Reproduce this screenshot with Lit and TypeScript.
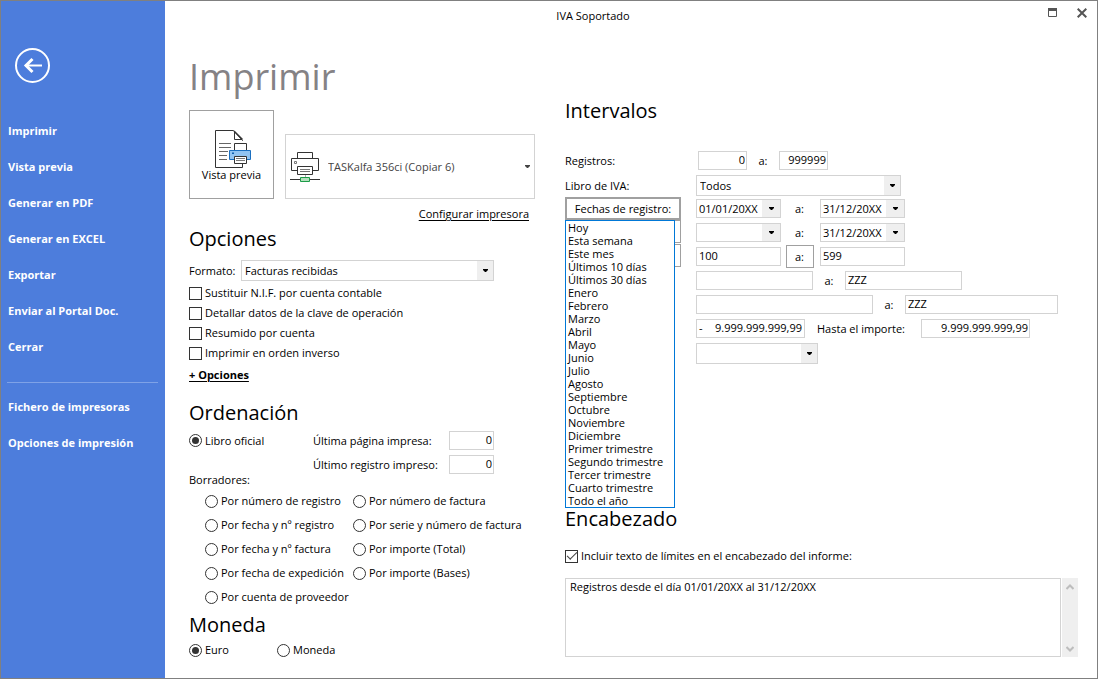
import { LitElement, html, css, svg } from "lit";
import { customElement, state } from "lit/decorators.js";

const NAV_MAIN = [
  "Imprimir",
  "Vista previa",
  "Generar en PDF",
  "Generar en EXCEL",
  "Exportar",
  "Enviar al Portal Doc.",
  "Cerrar",
];
const NAV_EXTRA = ["Fichero de impresoras", "Opciones de impresión"];

const CHECKS = [
  "Sustituir N.I.F. por cuenta contable",
  "Detallar datos de la clave de operación",
  "Resumido por cuenta",
  "Imprimir en orden inverso",
];

const DRAFTS = [
  "Por número de registro",
  "Por número de factura",
  "Por fecha y nº registro",
  "Por serie y número de factura",
  "Por fecha y nº factura",
  "Por importe (Total)",
  "Por fecha de expedición",
  "Por importe (Bases)",
  "Por cuenta de proveedor",
];

const PERIODS = [
  "Hoy",
  "Esta semana",
  "Este mes",
  "Últimos 10 días",
  "Últimos 30 días",
  "Enero",
  "Febrero",
  "Marzo",
  "Abril",
  "Mayo",
  "Junio",
  "Julio",
  "Agosto",
  "Septiembre",
  "Octubre",
  "Noviembre",
  "Diciembre",
  "Primer trimestre",
  "Segundo trimestre",
  "Tercer trimestre",
  "Cuarto trimestre",
  "Todo el año",
];

const arrow = html`<svg class="arrow" width="5" height="3" viewBox="0 0 5 3" aria-hidden="true">
  <path d="M0 0H5V1L3 3H2L0 1Z" fill="currentColor" />
</svg>`;

@customElement("app-root")
export class AppRoot extends LitElement {
  @state() private periodsOpen = true;

  static styles = css`
    :host {
      display: block;
      font-family: "Open Sans", "Noto Sans", sans-serif;
      font-size: 11px;
      line-height: 16px;
      color: #000;
    }
    *,
    *::before,
    *::after {
      box-sizing: border-box;
    }
    .window {
      display: flex;
      min-height: 100vh;
      border: 1px solid #808080;
      background: #fff;
    }
    button,
    input,
    select,
    textarea {
      font: inherit;
      color: inherit;
      margin: 0;
      border-radius: 0;
    }
    button {
      padding: 0;
      background: none;
      border: 0;
    }

    /* Sidebar */
    .side {
      flex: none;
      width: 164px;
      background: #4d7ddc;
      color: #fff;
      padding-top: 47px;
    }
    .back {
      display: block;
      width: 35px;
      height: 35px;
      margin: 0 0 30px 14px;
      color: #fff;
    }
    .back svg,
    .winbtn svg {
      display: block;
    }
    .nav {
      display: flex;
      flex-direction: column;
    }
    .nav a {
      padding-left: 7px;
      line-height: 36px;
      font-weight: 700;
      color: #fff;
      text-decoration: none;
    }
    .rule {
      height: 1px;
      margin: 17px 7px 6px 6px;
      border: 0;
      background: #7fa2e7;
    }

    /* Main area */
    .main {
      flex: 1;
      min-width: 0;
    }
    .titlebar {
      display: flex;
      height: 30px;
      align-items: center;
    }
    .title {
      flex: 1;
      text-align: center;
    }
    .winbtns {
      display: flex;
      flex: none;
      width: 76px;
      justify-content: flex-end;
      gap: 19px;
      padding-right: 10px;
      margin-top: -7px;
    }
    .winbtn {
      color: #555;
    }
    .body {
      display: grid;
      grid-template-columns: 352px minmax(0, 1fr);
      column-gap: 24px;
      padding: 19px 19px 18px 24px;
    }
    h1 {
      margin: 0 0 6px;
      font-size: 36px;
      line-height: 54px;
      font-weight: 400;
      color: #858285;
    }
    h2 {
      margin: 0 0 -2px;
      font-size: 20px;
      line-height: 30px;
      font-weight: 400;
    }

    .printers {
      display: flex;
      align-items: flex-end;
      gap: 11px;
    }
    .preview {
      display: flex;
      flex-direction: column;
      align-items: center;
      flex: none;
      width: 85px;
      height: 89px;
      padding-top: 19px;
      border: 1px solid #a0a0a0;
    }
    .preview svg {
      margin-left: 2px;
    }
    .preview span {
      line-height: 14px;
    }
    .printer {
      display: grid;
      flex: none;
      width: 250px;
      height: 65px;
      align-items: center;
      color: #444;
    }
    .printer > * {
      grid-area: 1 / 1;
      pointer-events: none;
    }
    .printer select {
      width: 100%;
      height: 65px;
      padding: 0 20px 0 42px;
      border: 1px solid #d3d3d3;
      background: #fff;
      appearance: none;
      pointer-events: auto;
    }
    .printer .icon {
      margin-left: 5px;
    }
    .printer .arrow {
      justify-self: end;
      margin-right: 5px;
    }
    .setup {
      display: flex;
      width: 340px;
      justify-content: flex-end;
      margin: 7px 0 2px;
    }
    a.link {
      color: #000;
      text-underline-offset: 2px;
    }

    /* Fields */
    .field {
      height: 19px;
      padding: 0 2px 2px;
      border: 1px solid #d3d3d3;
      background: #fff;
      line-height: 15px;
      min-width: 0;
      flex: none;
    }
    .num {
      text-align: right;
      padding-right: 1px;
    }
    .w45 {
      width: 45px;
    }
    .w49 {
      width: 49px;
    }
    .w85 {
      width: 85px;
    }
    .w109 {
      width: 109px;
    }
    .w117 {
      width: 117px;
    }
    .w153 {
      width: 153px;
    }
    .w177 {
      width: 177px;
    }
    .w122 {
      width: 122px;
    }
    .w205 {
      width: 205px;
    }
    .w253 {
      width: 253px;
    }
    .combo {
      display: grid;
      flex: none;
      align-items: center;
      height: 21px;
    }
    .combo > * {
      grid-area: 1 / 1;
    }
    .combo select {
      width: 100%;
      height: 21px;
      padding: 0 18px 0 3px;
      border: 1px solid #d3d3d3;
      background: #fff;
      appearance: none;
    }
    .combo .drop {
      justify-self: end;
      width: 16px;
      height: 19px;
      margin-right: 1px;
      pointer-events: none;
    }
    .drop {
      display: flex;
      flex: none;
      align-items: center;
      justify-content: center;
      background: #efefef;
    }
    .date {
      display: flex;
      flex: none;
      height: 19px;
      border: 1px solid #d3d3d3;
    }
    .date input {
      flex: 1;
      min-width: 0;
      height: 17px;
      padding: 0 2px;
      border: 0;
      background: none;
    }
    .date .drop {
      width: 18px;
      height: 17px;
    }
    .signed {
      display: flex;
      align-items: center;
    }
    .signed input {
      flex: 1;
      min-width: 0;
      height: 15px;
      padding: 0;
      border: 0;
      background: none;
      text-align: right;
    }

    /* Ticks and radios */
    .opt {
      display: flex;
      align-items: center;
      gap: 3px;
      white-space: nowrap;
    }
    .opt input {
      appearance: none;
      flex: none;
      width: 13px;
      height: 13px;
      border: 1px solid #333;
      background: #fff;
      display: grid;
      place-items: center;
    }
    .opt input[type="radio"] {
      border-radius: 50%;
    }
    .opt input[type="radio"]:checked::before {
      content: "";
      width: 7px;
      height: 7px;
      border-radius: 50%;
      background: #333;
    }
    .opt input[type="checkbox"]:checked::before {
      content: "";
      width: 10px;
      height: 5px;
      margin-top: -3px;
      border: solid #444;
      border-width: 0 0 1px 1px;
      transform: rotate(-45deg);
    }

    .format {
      display: flex;
      align-items: center;
      margin: 8px 0 2px;
    }
    .format label {
      width: 52px;
    }
    .checks {
      display: grid;
      grid-auto-rows: 20px;
    }
    .more {
      margin: 4px 0 15px;
      font-weight: 700;
    }
    .order {
      display: grid;
      grid-template-columns: 124px 136px auto;
      grid-auto-rows: 19px;
      row-gap: 5px;
      align-items: center;
      justify-content: start;
      margin-top: 5px;
    }
    .order .lbl {
      grid-column: 2;
    }
    .drafts-title {
      line-height: 12px;
    }
    .drafts {
      display: grid;
      grid-template-columns: 148px auto;
      grid-auto-rows: 24px;
      justify-content: start;
      margin: 3px 0 1px 16px;
    }
    .money {
      display: grid;
      grid-template-columns: 88px auto;
      justify-content: start;
      height: 20px;
      margin-top: 2px;
    }

    /* Ranges */
    .right {
      padding-top: 46px;
    }
    .ranges {
      display: grid;
      row-gap: 5px;
      margin: 27px 0 142px;
    }
    .row {
      display: flex;
      align-items: center;
      height: 19px;
    }
    .row.tall {
      height: 21px;
      margin-bottom: -2px;
    }
    .row > .name {
      flex: none;
      width: 131px;
    }
    .sep {
      display: flex;
      flex: none;
      width: 32px;
      justify-content: center;
    }
    .sep.wide {
      width: 39px;
      padding-right: 2px;
    }
    .upto {
      flex: none;
      width: 116px;
      padding-left: 12px;
    }
    .first {
      padding-left: 2px;
    }
    .pick {
      flex: none;
      width: 116px;
      height: 23px;
      border: 1px solid #a0a0a0;
      background: #fff;
    }
    .pick.active {
      border-width: 2px;
    }
    .abtn {
      width: 28px;
      height: 23px;
      border: 1px solid #a0a0a0;
      background: #fff;
    }
    .anchor {
      position: relative;
    }
    .popup {
      position: absolute;
      z-index: 2;
      top: 23px;
      left: 0;
      width: 110px;
      margin: 0;
      padding: 0 0 0 2px;
      list-style: none;
      border: 1px solid #0078d7;
      background: #fff;
      line-height: 13px;
      white-space: nowrap;
    }
    .head-check {
      height: 20px;
      margin: 14px 0 12px;
    }
    .memo {
      display: flex;
      gap: 1px;
      height: 79px;
    }
    .memo textarea {
      flex: 1;
      min-width: 0;
      padding: 0 4px;
      border: 1px solid #d3d3d3;
      resize: none;
      overflow: hidden;
    }
    .scroll {
      display: flex;
      flex-direction: column;
      justify-content: space-between;
      align-items: center;
      width: 16px;
      padding: 6px 0 5px;
      background: #efefef;
    }
    .scroll button,
    .scroll svg {
      display: block;
    }
  `;

  private date(value: string, label: string) {
    return html`<div class="date w85">
      <input type="text" .value=${value} aria-label=${label} />
      <button class="drop" aria-label="Abrir calendario">${arrow}</button>
    </div>`;
  }

  private text(width: string, value: string, label: string) {
    return html`<input class="field ${width}" type="text" .value=${value} aria-label=${label} />`;
  }

  private combo(id: string, width: string, value: string, label: string) {
    return html`<div class="combo ${width}">
      <select id=${id} aria-label=${label}>
        <option>${value}</option>
      </select>
      <span class="drop">${arrow}</span>
    </div>`;
  }

  private previewIcon() {
    return html`<svg width="38" height="38" viewBox="0 0 38 38" fill="none" aria-hidden="true">
      ${svg`
        <path d="M28.500 11V10.500L19.500 .5H1.500V37.500H28.500V34" fill="#fff" stroke="#333" />
        <path d="M20.500 1V9.500H28" stroke="#333" />
        <path d="M20 1L28.500 9.500" stroke="#333" stroke-width="1.500" />
        <path d="M5 13.500H17M5 17.500H17M5 21.500H14M5 25.500H13M5 29.500H13" stroke="#666" />
        <path d="M20.500 20V13.500H32.500V20" fill="#fff" stroke="#333" />
        <path d="M15.500 20.500H36.500V29.500H15.500Z" fill="#91c4f2" stroke="#1a6fc0" />
        <path d="M18 22.500H20V24H18Z" fill="#0f5fae" />
        <path d="M20.500 26.500H32.500V33.500H20.500Z" fill="#fff" stroke="#333" />
        <path d="M22 28.500H31M22 30.500H31" stroke="#777" />
      `}
    </svg>`;
  }

  private printerIcon() {
    return html`<svg class="icon" width="30" height="30" viewBox="0 0 30 30" fill="none" aria-hidden="true">
      ${svg`
        <path d="M7.500 6V.5H22.500V6" stroke="#333" />
        <path d="M7 18.500H1.500V6.500H28.500V18.500H23" stroke="#333" />
        <path d="M4.500 9.500H6.500V11.500H4.500Z" stroke="#777" />
        <path d="M7.500 14.500H22.500V22.500H7.500Z" fill="#fff" stroke="#333" />
        <path d="M10 17.500H20M10 19.500H20" stroke="#777" />
        <path d="M15.500 23V25" stroke="#aaa" />
        <path d="M0 27.500H30" stroke="#333" />
        <path d="M10.500 25.500H19.500V29.500H10.500Z" fill="#b5dfbe" stroke="#1c9c48" />
      `}
    </svg>`;
  }

  private left() {
    return html`<section>
      <h1>Imprimir</h1>
      <div class="printers">
        <button class="preview">${this.previewIcon()}<span>Vista previa</span></button>
        <div class="printer">
          <select aria-label="Impresora">
            <option>TASKalfa 356ci (Copiar 6)</option>
          </select>
          ${this.printerIcon()} ${arrow}
        </div>
      </div>
      <div class="setup"><a class="link" href="#">Configurar impresora</a></div>

      <h2>Opciones</h2>
      <div class="format">
        <label for="format">Formato:</label>
        ${this.combo("format", "w253", "Facturas recibidas", "Formato")}
      </div>
      <div class="checks">
        ${CHECKS.map((t) => html`<label class="opt"><input type="checkbox" />${t}</label>`)}
      </div>
      <div class="more"><a class="link" href="#">+ Opciones</a></div>

      <h2>Ordenación</h2>
      <div class="order">
        <label class="opt"><input type="radio" name="order" checked />Libro oficial</label>
        <label class="lbl" for="page">Última página impresa:</label>
        <input id="page" class="field num w45" type="text" value="0" />
        <label class="lbl" for="record">Último registro impreso:</label>
        <input id="record" class="field num w45" type="text" value="0" />
      </div>
      <div class="drafts-title">Borradores:</div>
      <div class="drafts">
        ${DRAFTS.map((t) => html`<label class="opt"><input type="radio" name="order" />${t}</label>`)}
      </div>

      <h2>Moneda</h2>
      <div class="money">
        <label class="opt"><input type="radio" name="money" checked />Euro</label>
        <label class="opt"><input type="radio" name="money" />Moneda</label>
      </div>
    </section>`;
  }

  private right() {
    return html`<section class="right">
      <h2>Intervalos</h2>
      <div class="ranges">
        <div class="row">
          <label class="name" for="reg-from">Registros:</label>
          <span class="first"><input id="reg-from" class="field num w49" type="text" value="0" /></span>
          <label class="sep" for="reg-to">a:</label>
          <input id="reg-to" class="field num w49" type="text" value="999999" />
        </div>
        <div class="row tall">
          <label class="name" for="book">Libro de IVA:</label>
          ${this.combo("book", "w205", "Todos", "Libro de IVA")}
        </div>
        <div class="row">
          <div class="name anchor">
            <button
              class="pick active"
              aria-haspopup="listbox"
              aria-expanded=${this.periodsOpen}
              @click=${() => (this.periodsOpen = !this.periodsOpen)}
            >
              Fechas de registro:
            </button>
            ${this.periodsOpen
              ? html`<ul class="popup" role="listbox" aria-label="Periodo">
                  ${PERIODS.map((p) => html`<li role="option">${p}</li>`)}
                </ul>`
              : null}
          </div>
          ${this.date("01/01/20XX", "Fecha de registro inicial")}
          <span class="sep wide">a:</span>
          ${this.date("31/12/20XX", "Fecha de registro final")}
        </div>
        <div class="row">
          <div class="name"><button class="pick" aria-label="Fechas de factura"></button></div>
          ${this.date("", "Fecha de factura inicial")}
          <span class="sep wide">a:</span>
          ${this.date("31/12/20XX", "Fecha de factura final")}
        </div>
        <div class="row">
          <div class="name"><button class="pick" aria-label="Cuentas"></button></div>
          ${this.text("w85", "100", "Cuenta inicial")}
          <span class="sep wide"><button class="abtn">a:</button></span>
          ${this.text("w85", "599", "Cuenta final")}
        </div>
        <div class="row">
          <span class="name"></span>
          ${this.text("w117", "", "Serie inicial")}
          <span class="sep">a:</span>
          ${this.text("w117", "ZZZ", "Serie final")}
        </div>
        <div class="row">
          <span class="name"></span>
          ${this.text("w177", "", "Factura inicial")}
          <span class="sep">a:</span>
          ${this.text("w153", "ZZZ", "Factura final")}
        </div>
        <div class="row">
          <span class="name"></span>
          <div class="field signed w109">
            <span>-</span><input type="text" value="9.999.999.999,99" aria-label="Desde el importe" />
          </div>
          <label class="upto" for="amount-to">Hasta el importe:</label>
          <input id="amount-to" class="field num w109" type="text" value="9.999.999.999,99" />
        </div>
        <div class="row tall">
          <span class="name"></span>
          ${this.combo("kind", "w122", "", "Tipo")}
        </div>
      </div>

      <h2>Encabezado</h2>
      <label class="opt head-check">
        <input type="checkbox" checked />Incluir texto de límites en el encabezado del informe:
      </label>
      <div class="memo">
        <textarea aria-label="Texto del encabezado" .value=${"Registros desde el día 01/01/20XX al 31/12/20XX"}></textarea>
        <div class="scroll">
          <button aria-label="Subir">
            <svg width="8" height="6" viewBox="0 0 8 6"><path d="M.5 5L4 1.500L7.500 5" fill="none" stroke="#bdbdbd" stroke-width="2" /></svg>
          </button>
          <button aria-label="Bajar">
            <svg width="8" height="6" viewBox="0 0 8 6"><path d="M.5 1L4 4.500L7.500 1" fill="none" stroke="#bdbdbd" stroke-width="2" /></svg>
          </button>
        </div>
      </div>
    </section>`;
  }

  render() {
    return html`<div class="window">
      <aside class="side">
        <button class="back" aria-label="Volver">
          <svg width="35" height="35" viewBox="0 0 35 35" fill="none" stroke="#fff" stroke-width="2">
            <circle cx="17.500" cy="17.500" r="16.500" />
            <path d="M10 17.500H27" />
            <path d="M17.500 11L11 17.500L17.500 24" stroke-width="3" />
          </svg>
        </button>
        <nav class="nav">
          ${NAV_MAIN.map((t) => html`<a href="#">${t}</a>`)}
          <hr class="rule" />
          ${NAV_EXTRA.map((t) => html`<a href="#">${t}</a>`)}
        </nav>
      </aside>
      <main class="main">
        <header class="titlebar">
          <span class="title">IVA Soportado</span>
          <div class="winbtns">
            <button class="winbtn" aria-label="Maximizar">
              <svg width="10" height="10" viewBox="0 0 10 10">
                <path d="M.5 1V8.500H8.500V1" fill="none" stroke="currentColor" />
                <path d="M0 0H9V3H0Z" fill="currentColor" />
              </svg>
            </button>
            <button class="winbtn" aria-label="Cerrar">
              <svg width="10" height="10" viewBox="0 0 10 10">
                <path d="M.7 .7L9.300 9.300M9.300 .7L.7 9.300" stroke="currentColor" stroke-width="2" />
              </svg>
            </button>
          </div>
        </header>
        <div class="body">${this.left()} ${this.right()}</div>
      </main>
    </div>`;
  }
}
